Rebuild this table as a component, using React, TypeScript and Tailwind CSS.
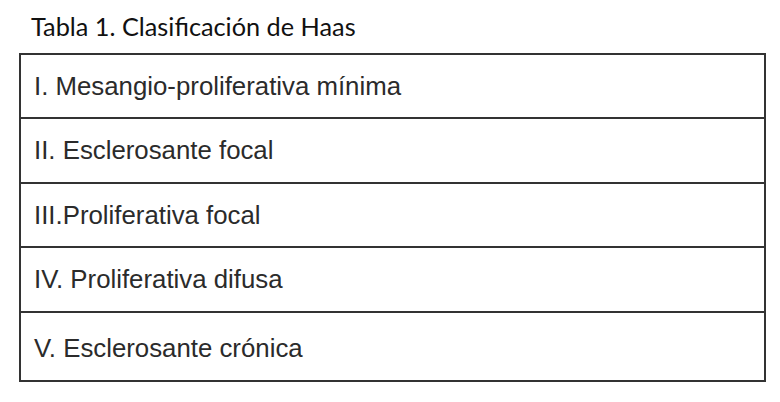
import React from "react";

const rows = [
  { text: "I. Mesangio-proliferativa mínima", h: "h-[64px]" },
  { text: "II. Esclerosante focal", h: "h-[65px]" },
  { text: "III.Proliferativa focal", h: "h-[64px]" },
  { text: "IV. Proliferativa difusa", h: "h-[65px]" },
  { text: "V. Esclerosante crónica", h: "h-[67px] pt-[4px]" },
];

export default function App() {
  return (
    <div className="w-[780px] h-[402px] bg-white overflow-hidden">
      <div className="pl-[19px] pt-[10px]">
        <div
          className="pl-[12px] h-[43px] text-[25.3px] leading-[32px] text-[#111]"
          style={{ fontFamily: "Lato, 'Open Sans', sans-serif" }}
        >
          Tabla 1. Clasificación de Haas
        </div>
        <div className="w-[747px] border-2 border-[#333] flex flex-col">
          {rows.map((r, i) => (
            <div
              key={i}
              className={`${r.h} ${i < rows.length - 1 ? "border-b-2 border-[#333]" : ""} flex items-center pl-[13px] text-[25.8px] text-[#2b2b2b]`}
              style={{ fontFamily: "'Liberation Sans', Arial, sans-serif" }}
            >
              {r.text}
            </div>
          ))}
        </div>
      </div>
    </div>
  );
}
